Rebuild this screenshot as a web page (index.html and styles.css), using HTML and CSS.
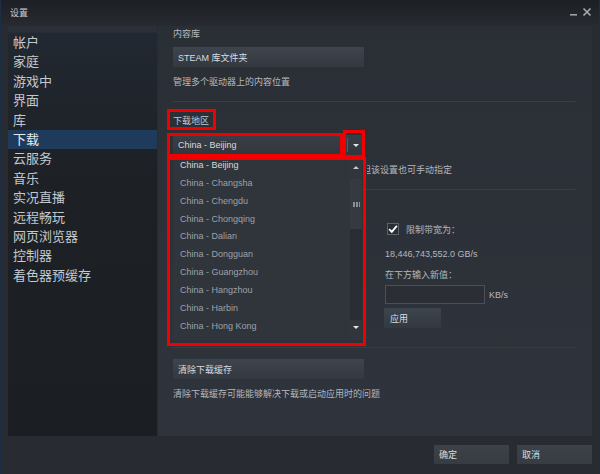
FILE: index.html
```html
<!DOCTYPE html>
<html>
<head>
  <title>设置</title>
  <link rel="stylesheet" href="styles.css">
</head>
<body>
  <div class="window">
    <div class="titlebar">
      <span class="title">设置</span>
      <svg class="controls" width="22" height="10" viewBox="0 0 22 10">
        <rect x="0" y="7" width="7" height="1.6" fill="#9da1a6"/>
        <path d="M13.5 1.5 L20.5 8.5 M20.5 1.5 L13.5 8.5" stroke="#a7abb0" stroke-width="1.6"/>
      </svg>
    </div>

    <div class="main">
      <ul class="sidebar">
        <li>帐户</li>
        <li>家庭</li>
        <li>游戏中</li>
        <li>界面</li>
        <li>库</li>
        <li class="active">下载</li>
        <li>云服务</li>
        <li>音乐</li>
        <li>实况直播</li>
        <li>远程畅玩</li>
        <li>网页浏览器</li>
        <li>控制器</li>
        <li>着色器预缓存</li>
      </ul>

      <div class="panel">
        <div class="label">内容库</div>
        <button class="btn btn-wide">STEAM 库文件夹</button>
        <div class="desc">管理多个驱动器上的内容位置</div>
        <div class="sep"></div>

        <div class="label"><span class="marked">下载地区</span></div>
        <div class="select-wrap">
          <div class="select-value">China - Beijing</div>
          <div class="select-arrow"><span class="tri-down"></span></div>

          <div class="dropdown">
            <div class="option hover">China - Beijing</div>
            <div class="option">China - Changsha</div>
            <div class="option">China - Chengdu</div>
            <div class="option">China - Chongqing</div>
            <div class="option">China - Dalian</div>
            <div class="option">China - Dongguan</div>
            <div class="option">China - Guangzhou</div>
            <div class="option">China - Hangzhou</div>
            <div class="option">China - Harbin</div>
            <div class="option">China - Hong Kong</div>
            <div class="scrollbar">
              <span class="tri-up"></span>
              <div class="thumb"><span class="grip"></span></div>
              <div class="track"></div>
              <span class="tri-down small"></span>
            </div>
          </div>

          <div class="mark mark-select"></div>
          <div class="mark mark-arrow"></div>
          <div class="mark mark-list"></div>
        </div>
        <div class="desc desc-covered">但该设置也可手动指定</div>
        <div class="sep"></div>

        <div class="limit">
          <div class="check-row">
            <span class="checkbox">
              <svg width="10" height="10" viewBox="0 0 10 10"><path d="M1.2 5.2 L3.8 7.8 L8.8 1.8" fill="none" stroke="#ffffff" stroke-width="1.8"/></svg>
            </span>
            <span>限制带宽为：</span>
          </div>
          <div class="speed">18,446,743,552.0 GB/s</div>
          <div class="desc">在下方输入新值：</div>
          <div class="input-row">
            <input type="text" class="rate-input">
            <span>KB/s</span>
          </div>
          <button class="btn btn-apply">应用</button>
        </div>
        <div class="sep sep-low"></div>

        <button class="btn btn-wide btn-clear">清除下载缓存</button>
        <div class="desc">清除下载缓存可能能够解决下载或启动应用时的问题</div>
      </div>
    </div>

    <div class="footer">
      <button class="btn btn-footer">确定</button>
      <button class="btn btn-footer">取消</button>
    </div>
  </div>
</body>
</html>
```

FILE: styles.css
```css
body {
  margin: 0;
  font-family: "Liberation Sans", "Noto Sans CJK SC", sans-serif;
  font-size: 9px;
  color: #b4b8bd;
  background-color: #282b31;
}

.window {
  width: 600px;
  height: 474px;
  box-sizing: border-box;
  display: flex;
  flex-direction: column;
  border-left: 1px solid #1b2e44;
  border-right: 1px solid #1b2e44;
}

.titlebar {
  height: 26px;
  box-sizing: border-box;
  display: flex;
  align-items: flex-start;
  justify-content: space-between;
  padding: 7px 7px 0 9px;
  background: linear-gradient(#1c1f24, #272a30);
}

.title {
  line-height: 12px;
  color: #c9cdd1;
}

.main {
  height: 410px;
  display: flex;
  gap: 1px;
  padding: 0 7px;
}

.sidebar {
  width: 149px;
  margin: 0;
  padding: 7px 0 0 0;
  list-style-type: none;
  background: linear-gradient(#2b3038 0, #2b3038 6px, #222831 7px, #1d2126 150px, #1b1e22);
}

.sidebar li {
  height: 19.4px;
  line-height: 19.4px;
  padding-left: 5px;
  font-size: 13px;
  color: #c2c9d0;
}

.sidebar li.active {
  background-color: #1f3b5c;
  color: #e8ecf0;
}

.panel {
  flex: 1;
  padding: 2px 17px 0 15px;
  background: linear-gradient(#2a2e35, #2f333b);
}

.label,
.desc,
.speed {
  line-height: 12px;
}

.desc {
  margin-top: 9px;
}

.desc-covered {
  margin-left: 194px;
  overflow: hidden;
  white-space: nowrap;
  text-indent: -5px;
}

.btn {
  display: block;
  margin: 0;
  padding: 0 0 0 5px;
  border: none;
  box-sizing: border-box;
  height: 20px;
  text-align: left;
  font-family: inherit;
  font-size: 9px;
  color: #d9dcdf;
  background: linear-gradient(#3e444d, #343940);
}

.btn-wide {
  width: 191px;
  margin-top: 7px;
}

.sep {
  height: 1px;
  margin-top: 13px;
  background-color: #393e46;
}

.label .marked {
  display: inline-block;
  margin: 10px 0 0 -3px;
  padding: 3px 4px 0 3px;
  color: #c4c8cc;
  outline: 3px solid #f20000;
}

.select-wrap {
  position: relative;
  width: 191px;
  height: 20px;
  margin-top: 8px;
  display: flex;
  background: linear-gradient(#3a3f47, #32363d);
}

.select-value {
  flex: 1;
  padding-left: 5px;
  line-height: 20px;
  color: #d6d9dc;
}

.select-arrow {
  width: 16px;
  display: flex;
  align-items: center;
  justify-content: center;
  border-left: 1px solid #585e66;
  margin: 3px 0;
}

.tri-down {
  width: 0;
  height: 0;
  border-left: 3px solid transparent;
  border-right: 3px solid transparent;
  border-top: 3px solid #e4e6e8;
}

.tri-up {
  width: 0;
  height: 0;
  border-left: 3px solid transparent;
  border-right: 3px solid transparent;
  border-bottom: 3px solid #c4c8cc;
}

.dropdown {
  position: absolute;
  left: 0;
  top: 22px;
  width: 189px;
  height: 183px;
  background-color: #30343b;
  z-index: 2;
}

.option {
  height: 17.86px;
  line-height: 17.86px;
  padding-left: 7px;
  color: #9ca2a9;
}

.option.hover {
  color: #d6d9dc;
}

.scrollbar {
  position: absolute;
  top: 0;
  right: 0;
  bottom: 0;
  width: 12px;
  display: flex;
  flex-direction: column;
  align-items: center;
  padding: 9px 0 11px 0;
  box-sizing: border-box;
  background-color: #31353c;
}

.scrollbar .thumb {
  width: 12px;
  height: 50px;
  margin-top: 10px;
  display: flex;
  align-items: center;
  justify-content: center;
  background-color: #353940;
}

.scrollbar .grip {
  width: 7px;
  height: 5px;
  background: repeating-linear-gradient(90deg, #8a9097 0, #8a9097 2px, transparent 2px, transparent 3px);
}

.scrollbar .track {
  flex: 1;
  width: 12px;
  background-color: #2a2d34;
  margin-bottom: 6px;
}

.mark {
  position: absolute;
  box-sizing: border-box;
  border: 3px solid #f20000;
  z-index: 3;
}

.mark-select {
  left: -6px;
  top: -2px;
  width: 176px;
  height: 24px;
}

.mark-arrow {
  left: 170px;
  top: -5px;
  width: 22px;
  height: 28px;
}

.mark-list {
  left: -6px;
  top: 22px;
  width: 199px;
  height: 189px;
}

.limit {
  margin-left: 212px;
  padding-top: 33px;
}

.check-row {
  display: flex;
  align-items: center;
  height: 12px;
  gap: 7px;
  padding-left: 2px;
}

.checkbox {
  width: 12px;
  height: 12px;
  box-sizing: border-box;
  border: 1px solid #5d636b;
  background-color: #2a2d33;
  display: flex;
  align-items: center;
  justify-content: center;
}

.speed {
  margin-top: 13px;
}

.input-row {
  margin-top: 4px;
  display: flex;
  align-items: center;
  gap: 4px;
}

.rate-input {
  width: 100px;
  height: 19px;
  box-sizing: border-box;
  margin: 0;
  border: 1px solid #4b5058;
  background-color: #2b2e34;
}

.btn-apply {
  width: 57px;
  margin: 4px 0 0 -1px;
  padding-left: 6px;
}

.sep-low {
  margin-top: 19px;
}

.btn-clear {
  margin-top: 11px;
}

.footer {
  flex: 1;
  display: flex;
  justify-content: flex-end;
  gap: 8px;
  padding: 9px 7px 0 0;
}

.btn-footer {
  width: 75px;
  height: 19px;
  background: linear-gradient(#3d424a, #373c43);
}
```
